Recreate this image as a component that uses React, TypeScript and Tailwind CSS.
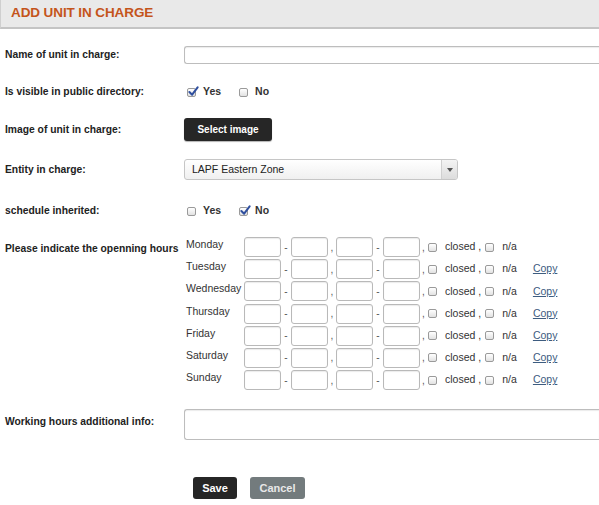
import React from "react";

const days = ["Monday", "Tuesday", "Wednesday", "Thursday", "Friday", "Saturday", "Sunday"];

function Box({ checked = false }: { checked?: boolean }) {
    return (
        <span className="relative inline-block w-[9px] h-[9px] rounded-[2px] border border-[#9a9a9a] bg-gradient-to-b from-white to-[#e2e2e2] shrink-0">
            {checked && (
                <svg viewBox="0 0 12 12" className="absolute left-[0px] top-[-3px] w-[11px] h-[11px]">
                    <path d="M1.5 6.5 L4.5 9.5 L10.5 1.5" fill="none" stroke="#2f4f9e" strokeWidth="2.2" strokeLinecap="round" strokeLinejoin="round" />
                </svg>
            )}
        </span>
    );
}

function TimeInput() {
    return <span className="inline-block w-[37px] h-[20px] rounded-[3px] border border-[#b9b9b9] bg-white shadow-[inset_0_1px_1px_rgba(0,0,0,0.08)] shrink-0" />;
}

function YesNo({ yes }: { yes: boolean }) {
    return (
        <div className="flex items-center h-[14px] pl-[3px]">
            <Box checked={yes} />
            <span className="ml-[7px] font-bold text-[10.5px] text-[#333]">Yes</span>
            <span className="ml-[18px]"><Box checked={!yes} /></span>
            <span className="ml-[7px] font-bold text-[10.5px] text-[#333]">No</span>
        </div>
    );
}

export default function App() {
    const label = "w-[184px] shrink-0 pl-[5px] font-bold text-[10.3px] text-[#222] whitespace-nowrap";
    return (
        <div className="w-[599px] h-[505px] overflow-hidden bg-white font-['Liberation_Sans',Arial,sans-serif]">
            <div className="h-[29px] bg-[#e9e9e9] border-b-2 border-[#c4c4c4] border-l border-l-[#cfcfcf] flex items-center pl-[10px]">
                <span className="font-bold text-[13.5px] text-[#c4541b] tracking-[-0.1px]">ADD UNIT IN CHARGE</span>
            </div>

            {/* name */}
            <div className="flex items-center mt-[17px] h-[18px]">
                <div className={label}>Name of unit in charge:</div>
                <div className="flex-1 h-[18px] rounded-l-[3px] border border-r-0 border-[#bdbdbd] bg-white shadow-[inset_0_1px_1px_rgba(0,0,0,0.08)]" />
            </div>

            {/* visible */}
            <div className="flex items-center mt-[21px] h-[14px]">
                <div className={label}>Is visible in public directory:</div>
                <YesNo yes={true} />
            </div>

            {/* image */}
            <div className="flex items-center mt-[19px] h-[23px]">
                <div className={label}>Image of unit in charge:</div>
                <button className="w-[88px] h-[23px] rounded-[3px] bg-[#262626] text-white font-bold text-[10px] shadow-[0_1px_1px_rgba(0,0,0,0.3)]">Select image</button>
            </div>

            {/* entity */}
            <div className="flex items-center mt-[18px] h-[21px]">
                <div className={label}>Entity in charge:</div>
                <div className="flex w-[274px] h-[21px] rounded-[3px] border border-[#c6c6c6] bg-gradient-to-b from-white to-[#f0f0f0] overflow-hidden">
                    <div className="flex-1 flex items-center pl-[7px] text-[10.5px] text-[#222]">LAPF Eastern Zone</div>
                    <div className="w-[16px] border-l border-[#d0d0d0] bg-gradient-to-b from-[#f4f4f4] to-[#dcdcdc] flex items-center justify-center">
                        <span className="w-0 h-0 border-l-[3px] border-r-[3px] border-t-[4px] border-l-transparent border-r-transparent border-t-[#555]" />
                    </div>
                </div>
            </div>

            {/* schedule */}
            <div className="flex items-center mt-[24px] h-[14px]">
                <div className={label}>schedule inherited:</div>
                <YesNo yes={false} />
            </div>

            {/* hours */}
            <div className="flex mt-[19px]">
                <div className={label + " pt-[4px]"}>Please indicate the openning hours</div>
                <div className="flex flex-col gap-[2.2px] pl-[2px]">
                    {days.map((d, i) => (
                        <div key={d} className="flex items-center h-[20px] text-[10.5px] text-[#333]">
                            <span className="w-[58px] self-start leading-[14px]">{d}</span>
                            <TimeInput />
                            <span className="w-[10px] text-center text-[10px] text-[#555]">-</span>
                            <TimeInput />
                            <span className="w-[8px] text-center text-[10px] text-[#555]">,</span>
                            <TimeInput />
                            <span className="w-[10px] text-center text-[10px] text-[#555]">-</span>
                            <TimeInput />
                            <span className="w-[8px] pl-[2px] text-[10px] text-[#555]">,</span>
                            <Box />
                            <span className="ml-[8px]">closed</span>
                            <span className="ml-[3px] mr-[4px]">,</span>
                            <Box />
                            <span className="ml-[8px]">n/a</span>
                            {i > 0 && <span className="ml-[16px] text-[#3d5c80] underline">Copy</span>}
                        </div>
                    ))}
                </div>
            </div>

            {/* additional info */}
            <div className="flex mt-[19px]">
                <div className={label + " pt-[5px]"}>Working hours additional info:</div>
                <div className="flex-1 h-[31px] rounded-l-[3px] border border-r-0 border-[#bdbdbd] bg-white shadow-[inset_0_1px_1px_rgba(0,0,0,0.08)]" />
            </div>

            {/* buttons */}
            <div className="flex mt-[37px] pl-[193px] gap-[13px]">
                <button className="w-[44px] h-[22px] rounded-[3px] bg-[#262626] text-white font-bold text-[11px]">Save</button>
                <button className="w-[55px] h-[22px] rounded-[3px] bg-[#737b7d] text-[#e8e8e8] font-bold text-[11px]">Cancel</button>
            </div>
        </div>
    );
}
